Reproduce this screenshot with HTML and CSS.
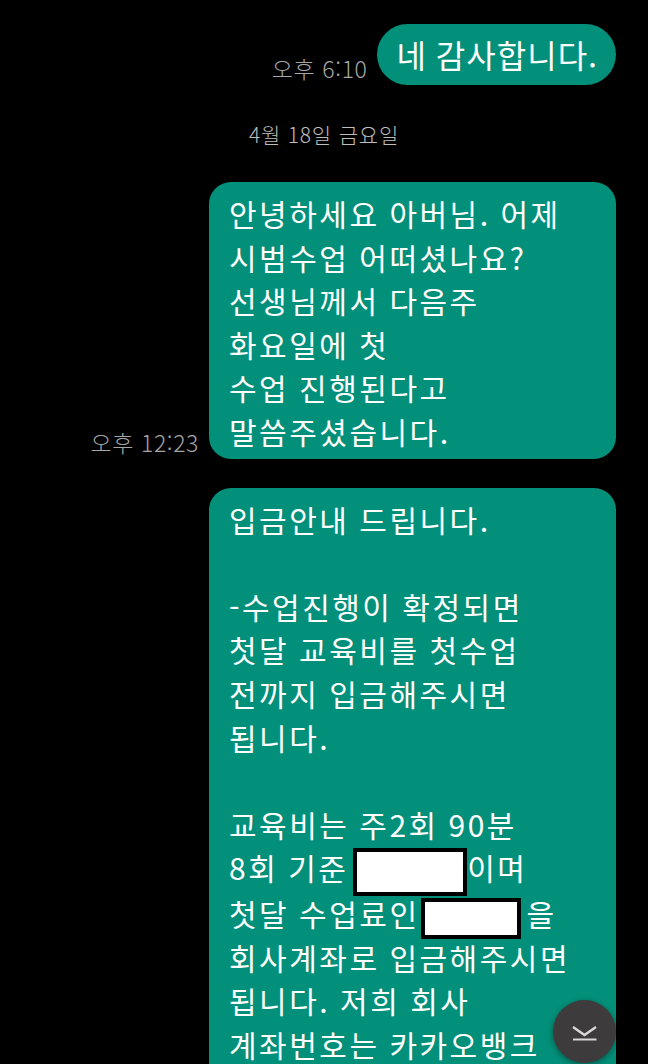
FILE: index.html
```html
<!DOCTYPE html>
<html lang="ko">

<head>
	<meta charset="UTF-8">
	<meta name="viewport" content="width=device-width, initial-scale=1.0">
	<title>채팅</title>
	<link rel="stylesheet" href="styles.css">
</head>

<body>

	<div class="chat">

		<div class="row">
			<span class="time">오후 6:10</span>
			<div class="bubble short">네 감사합니다.</div>
		</div>

		<div class="date">4월 18일 금요일</div>

		<div class="row">
			<span class="time">오후 12:23</span>
			<div class="bubble">안녕하세요 아버님. 어제<br>시범수업 어떠셨나요?<br>선생님께서 다음주<br>화요일에 첫<br>수업 진행된다고<br>말씀주셨습니다.</div>
		</div>

		<div class="row next">
			<div class="bubble tall">입금안내 드립니다.<br><br>-수업진행이 확정되면<br>첫달 교육비를 첫수업<br>전까지 입금해주시면<br>됩니다.<br><br>교육비는 주2회 90분<br>8회 기준 <span class="hidden wide"></span>이며<br>첫달 수업료인<span class="hidden"></span>을<br>회사계좌로 입금해주시면<br>됩니다. 저희 회사<br>계좌번호는 카카오뱅크</div>
		</div>

	</div>

	<button class="scroll-down" aria-label="맨 아래로">
		<svg width="63" height="63" viewBox="0 0 63 63">
			<polyline points="20,27 31.5,35 43,27" fill="none" stroke="#d9d9d9" stroke-width="2.4" />
			<line x1="20" y1="39.5" x2="43.5" y2="39.5" stroke="#d9d9d9" stroke-width="2" />
		</svg>
	</button>

</body>

</html>
```

FILE: styles.css
```css
html,
body {
	height: 100%;
	overflow: hidden;
}

body {
	margin: 0;
	background-color: #000;
	font-family: "Noto Sans CJK KR", "Noto Sans", sans-serif;
	color: #fff;
}

.chat {
	padding: 24px 32px 0 0;
}

.row {
	display: flex;
	justify-content: flex-end;
	align-items: flex-end;
	gap: 10px;
}

.row.next {
	margin-top: 29px;
}

.time {
	font-size: 23px;
	font-weight: 300;
	line-height: 28px;
	letter-spacing: 0.6px;
	color: #a6a6a6;
	padding-bottom: 3px;
	white-space: nowrap;
}

.date {
	text-align: center;
	font-size: 21px;
	font-weight: 300;
	line-height: 28px;
	letter-spacing: 0.8px;
	color: #bdbdbd;
	margin: 35px 0 34px 32px;
}

.bubble {
	box-sizing: border-box;
	width: 407px;
	background-color: #03907a;
	border-radius: 22px;
	padding: 10px 20px 5px 20px;
	font-size: 30px;
	line-height: 43.6px;
	letter-spacing: 2.5px;
	word-spacing: -1px;
	white-space: nowrap;
}

.bubble.short {
	width: auto;
	height: 61px;
	border-radius: 31px;
	padding: 0 18px 0 19px;
	font-size: 32px;
	line-height: 61px;
	letter-spacing: 1px;
}

.bubble.tall {
	padding-bottom: 40px;
}

.hidden {
	display: inline-block;
	box-sizing: border-box;
	width: 100px;
	height: 41px;
	margin: -4px 6px -4px 1px;
	vertical-align: middle;
	background-color: #fff;
	border: 4px solid #000;
}

.hidden.wide {
	width: 114px;
	height: 48px;
	margin: -4px 0 -4px -5px;
}

.scroll-down {
	position: absolute;
	left: 553px;
	top: 1000px;
	width: 63px;
	height: 63px;
	padding: 0;
	border: none;
	border-radius: 50%;
	background-color: #3d3b3b;
	box-shadow: 0 2px 6px rgba(0, 0, 0, 0.4);
}

.scroll-down svg {
	display: block;
}
```
